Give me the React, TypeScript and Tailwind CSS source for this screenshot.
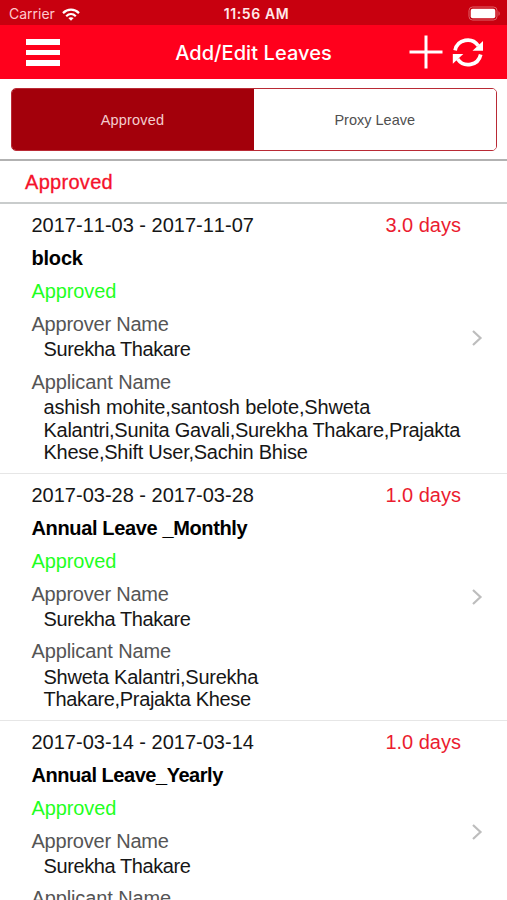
import { clsx } from 'clsx';

interface Leave {
  dates: string;
  days: string;
  title: string;
  titleClass: string;
  approver: string;
  applicants: { text: string; className: string }[];
}

const LEAVES: Leave[] = [
  {
    dates: '2017-11-03 - 2017-11-07',
    days: '3.0 days',
    title: 'block',
    titleClass: 'tracking-[-0.2px]',
    approver: 'Surekha Thakare',
    applicants: [
      { text: 'ashish mohite,santosh belote,Shweta', className: 'tracking-[-0.13px]' },
      { text: 'Kalantri,Sunita Gavali,Surekha Thakare,Prajakta', className: 'tracking-[-0.28px]' },
      { text: 'Khese,Shift User,Sachin Bhise', className: 'tracking-[-0.25px]' },
    ],
  },
  {
    dates: '2017-03-28 - 2017-03-28',
    days: '1.0 days',
    title: 'Annual Leave _Monthly',
    titleClass: 'tracking-[-0.36px]',
    approver: 'Surekha Thakare',
    applicants: [
      { text: 'Shweta Kalantri,Surekha', className: 'tracking-[-0.24px]' },
      { text: 'Thakare,Prajakta Khese', className: 'tracking-[-0.33px]' },
    ],
  },
  {
    dates: '2017-03-14 - 2017-03-14',
    days: '1.0 days',
    title: 'Annual Leave_Yearly',
    titleClass: 'tracking-[-0.46px]',
    approver: 'Surekha Thakare',
    applicants: [],
  },
];

const StatusBar = () => (
  <div className="h-[25px] shrink-0 bg-[#c8000f] grid grid-cols-3 items-center pl-[9px] pr-[5px] text-[#ffe8ea] font-['Inter',sans-serif] text-[14px] leading-none">
    <div className="flex items-center gap-[7px] pt-[3px]">
      <span className="text-[#ffc9cd]">Carrier</span>
      <svg width="18" height="13" viewBox="0 0 18 13" fill="none" stroke="#fff" strokeWidth="2.2">
        <path d="M1 5.1C5.6.5 12.4.5 17 5.1" />
        <path d="M4.2 8.2c2.8-2.7 6.8-2.7 9.6 0" />
        <path d="M9 12.8 6.3 10.1c1.6-1.3 3.8-1.3 5.4 0z" fill="#fff" stroke="none" />
      </svg>
    </div>
    <span className="text-center pt-[3px] pl-[2px] font-semibold tracking-[0.6px] whitespace-nowrap">11:56 AM</span>
    <div className="flex justify-end pt-[1px]">
      <svg width="34" height="15" viewBox="0 0 34 15" fill="none">
        <rect x="1" y="1" width="28" height="13" rx="3.5" stroke="#e0626b" strokeWidth="1" />
        <rect x="2.7" y="2.7" width="24.6" height="9.6" rx="2" fill="#fff" />
        <path d="M30.5 5.2c1.6.6 1.6 4 0 4.6z" fill="#e0626b" />
      </svg>
    </div>
  </div>
);

const Header = () => (
  <header className="h-[54px] shrink-0 bg-[#ff001c] flex items-center justify-between pl-[26px] pr-[23px]">
    <button className="w-[72px] flex flex-col gap-[5px] pt-px">
      <span className="block w-[34px] h-[5.5px] bg-white" />
      <span className="block w-[34px] h-[5.5px] bg-white" />
      <span className="block w-[34px] h-[5.5px] bg-white" />
    </button>
    <h1 className="text-white font-['Inter',sans-serif] font-medium text-[20px] tracking-[0.07px] leading-none whitespace-nowrap pt-px">Add/Edit Leaves</h1>
    <div className="flex items-center gap-[9px]">
      <svg width="34" height="34" viewBox="0 0 34 34" stroke="#fff" strokeWidth="3">
        <path d="M17 .5v33M.5 17h33" />
      </svg>
      <svg width="32" height="31" viewBox="0 0 32 31" fill="none" stroke="#fff" strokeWidth="3.7">
        <path d="M3.1 13.3A12.8 12.8 0 0 1 26.2 8.8" />
        <path d="M28.7 17.5A12.8 12.8 0 0 1 5.6 22" />
        <path d="M31 4v9.7h-10.5z" fill="#fff" stroke="none" />
        <path d="M.8 26.8v-9.7h10.5z" fill="#fff" stroke="none" />
      </svg>
    </div>
  </header>
);

const SegmentedControl = () => (
  <div className="pt-[9px] pl-[10.5px] pr-[10px] pb-[8px] shrink-0">
    <div className="h-[63px] flex rounded-[5px] border-[1.5px] border-[#b92a35] overflow-hidden text-[14.5px]">
      <button className="w-[242px] pt-[2px] bg-[#a3000b] text-[#f3cdcf] tracking-[0.2px]">Approved</button>
      <button className="flex-1 pt-[2px] bg-white text-[#505050]">Proxy Leave</button>
    </div>
  </div>
);

const LeaveRow = ({ leave }: { leave: Leave }) => (
  <div className="min-h-[224px] shrink-0 flex items-center border-b-[1.5px] border-[#e6e6e6] pl-[31.5px] pr-[24px]">
    <div className="flex-1 self-stretch pt-[10px] pb-[9px]">
      <div className="flex justify-between">
        <span className="[font-kerning:none]">{leave.dates}</span>
        <span className="text-[#eb1c30] mr-[10px] [font-kerning:none]">{leave.days}</span>
      </div>
      <div className={clsx('mt-[10.5px] font-bold text-black', leave.titleClass)}>{leave.title}</div>
      <div className="mt-[10.5px] text-[#1fff1f] tracking-[-0.1px]">Approved</div>
      <div className="mt-[10.5px] text-[#555] tracking-[-0.22px]">Approver Name</div>
      <div className="mt-[2.5px] pl-[12px] tracking-[-0.4px]">{leave.approver}</div>
      <div className="mt-[10px] text-[#555] tracking-[-0.12px]">Applicant Name</div>
      <div className="mt-[3px] pl-[12px]">
        {leave.applicants.map((line) => (
          <div key={line.text} className={clsx('whitespace-nowrap', line.className)}>{line.text}</div>
        ))}
      </div>
    </div>
    <svg className="shrink-0" width="12" height="18" viewBox="0 0 12 18" fill="none" stroke="#bdbdbd" strokeWidth="2.2">
      <path d="M2 2l7.5 7L2 16" />
    </svg>
  </div>
);

export default function App() {
  return (
    <div className="w-[507px] h-[900px] overflow-hidden flex flex-col bg-white text-[#161616] font-['Liberation_Sans',Arial,sans-serif] text-[20px] leading-[22.5px]">
      <StatusBar />
      <Header />
      <SegmentedControl />
      <div className="h-[45px] shrink-0 flex items-center pt-px pl-[25px] border-t-2 border-t-[#b2b2b2] border-b-2 border-b-[#c9cccc] text-[#f5122b] tracking-[0.3px] [-webkit-text-stroke:0.3px_#f5122b]">
        Approved
      </div>
      {LEAVES.map((leave) => (
        <LeaveRow key={leave.dates} leave={leave} />
      ))}
    </div>
  );
}
